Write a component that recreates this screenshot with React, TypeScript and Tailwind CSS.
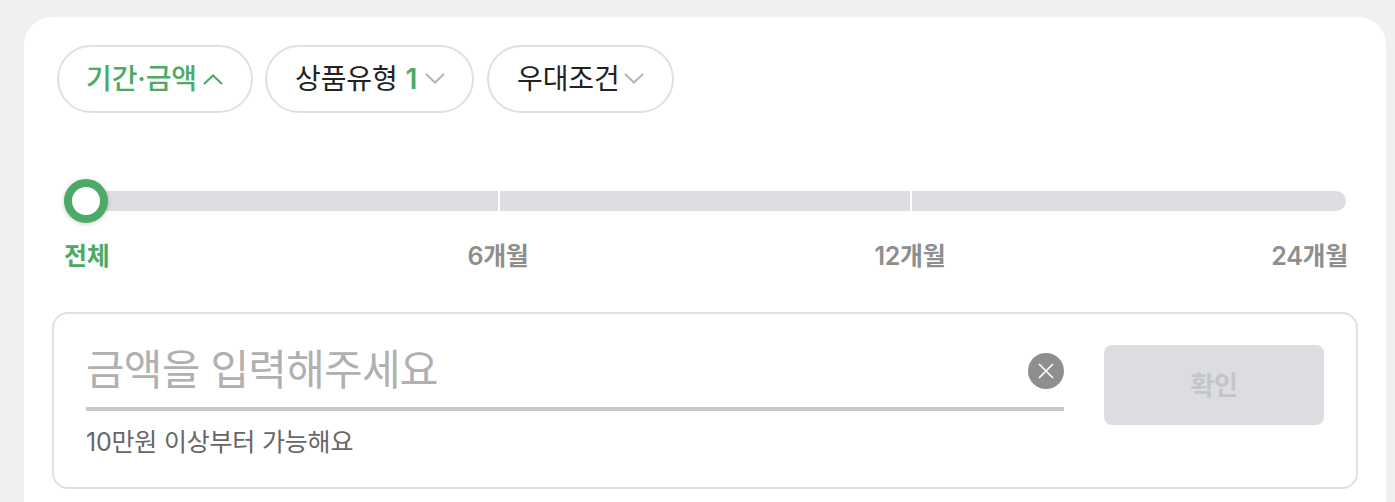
import React from 'react';

const PERIODS = [
    { label: '전체', className: 'text-left text-[#4bab66]' },
    { label: '6개월', className: 'text-center' },
    { label: '12개월', className: 'text-center' },
    { label: '24개월', className: 'text-right' },
];

function Chevron({ up, color }: { up?: boolean; color: string }) {
    return (
        <svg width="20" height="12" viewBox="0 0 20 12" fill="none" className="shrink-0">
            <path
                d={up ? 'M1 11L10 2.5L19 11' : 'M1 1L10 9.5L19 1'}
                stroke={color}
                strokeWidth="2"
            />
        </svg>
    );
}

export default function App() {
    return (
        <div
            className="h-[502px] w-[1395px] overflow-hidden bg-[#eff0f2] pl-6 pr-[9px] pt-[17px] text-[#222222]"
            style={{ fontFamily: 'Inter, "Noto Sans CJK KR", sans-serif' }}
        >
            <div className="h-[520px] rounded-t-[28px] bg-white px-7 pt-7">
                {/* Filter pills */}
                <div className="flex pl-[5px]">
                    <button className="flex h-[68px] w-[196px] items-center gap-[6px] rounded-full border-2 border-[#dfe0e0] pl-[27px] text-[28px] font-medium leading-none tracking-[-0.1px] text-[#4bab66]">
                        <span>기간·금액</span>
                        <Chevron up color="#4bab66" />
                    </button>
                    <button className="ml-3 flex h-[68px] w-[209px] items-center gap-[8px] rounded-full border-2 border-[#dfe0e0] pl-[28px] text-[28px] leading-none tracking-[-0.1px]">
                        <span>
                            상품유형 <span className="font-semibold text-[#4bab66]">1</span>
                        </span>
                        <Chevron color="#b5b7ae" />
                    </button>
                    <button className="ml-[13px] flex h-[68px] w-[187px] items-center gap-[4px] rounded-full border-2 border-[#dfe0e0] pl-[28px] text-[28px] leading-none tracking-[-0.1px]">
                        <span>우대조건</span>
                        <Chevron color="#b5b7ae" />
                    </button>
                </div>

                {/* Period slider */}
                <div className="ml-3 mr-3 mt-[78px] flex h-5 overflow-hidden rounded-full">
                    <div className="w-[434px] bg-[#dcdde0]" />
                    <div className="ml-[2px] w-[410px] bg-[#dcdde0]" />
                    <div className="ml-[2px] flex-1 bg-[#dcdde0]" />
                </div>
                <div className="relative z-10 -mt-8 ml-3 h-11 w-11 rounded-full border-[8px] border-[#4bab66] bg-white shadow-[0_1px_4px_rgba(0,0,0,0.2)]" />
                <div className="ml-3 mr-[10px] mt-[13px] grid grid-cols-[330px_208px_616px_1fr] text-[25px] font-semibold leading-[40px] tracking-[-0.3px] text-[#8e8e8e]">
                    {PERIODS.map((p) => (
                        <span key={p.label} className={p.className}>
                            {p.label}
                        </span>
                    ))}
                </div>

                {/* Amount input */}
                <div className="mt-9 flex h-[177px] rounded-2xl border-2 border-[#dfe0e0] pl-8 pr-8">
                    <div className="w-[978px]">
                        <div className="flex h-[97px] items-center justify-between border-b-4 border-[#c8c9cb] pt-5">
                            <span className="mb-[2px] text-[42px] leading-none tracking-[-0.8px] text-[#b0b0b0]">금액을 입력해주세요</span>
                            <span className="flex h-9 w-9 items-center justify-center rounded-full bg-[#8e8e8e]">
                                <svg width="16" height="16" viewBox="0 0 16 16" fill="none">
                                    <path d="M1 1L15 15M15 1L1 15" stroke="white" strokeWidth="1.6" />
                                </svg>
                            </span>
                        </div>
                        <p className="mt-[13px] text-[25px] leading-[36px] tracking-[-0.2px] text-[#666666]">10만원 이상부터 가능해요</p>
                    </div>
                    <button className="ml-10 mt-[31px] h-20 w-[220px] rounded-lg bg-[#dcdde0] text-[26px] font-semibold tracking-[-0.3px] text-[#c4c5c8]">
                        확인
                    </button>
                </div>
            </div>
        </div>
    );
}
